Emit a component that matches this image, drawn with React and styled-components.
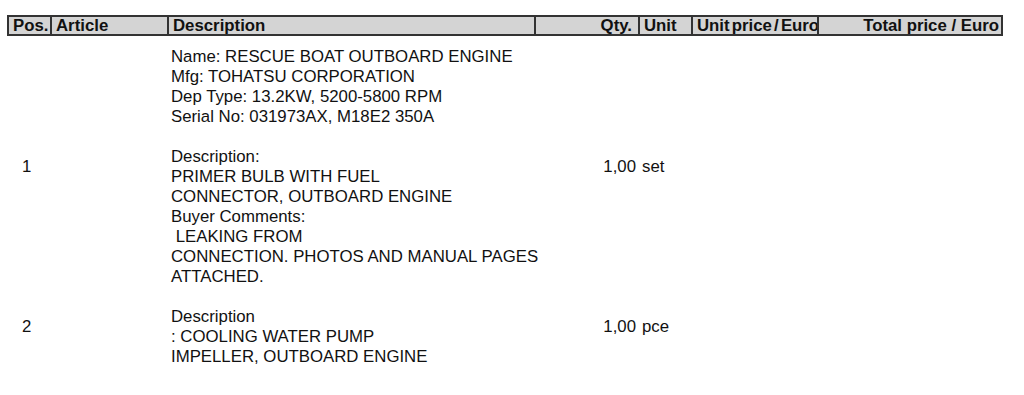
import React from 'react';
import styled, { createGlobalStyle } from 'styled-components';

const GlobalStyle = createGlobalStyle`
  html, body {
    margin: 0;
    padding: 0;
    background: #ffffff;
  }
`;

const COLS = '41px 117px 367px 104px 53px 126px 188px';

const Page = styled.div`
  padding: 15px 0 0 7px;
  width: 996px;
  font-family: "Liberation Sans", Arial, sans-serif;
  color: #111111;
`;

const HeaderRow = styled.div`
  display: grid;
  grid-template-columns: ${COLS};
  height: 21px;
  box-sizing: border-box;
  background: #d4d4d4;
  border: 2px solid #333333;
`;

const HeadCell = styled.div`
  display: flex;
  align-items: center;
  justify-content: ${(p) => (p.right ? 'flex-end' : 'flex-start')};
  padding: ${(p) => (p.right ? '0 6px 0 0' : '0 0 0 4px')};
  border-left: ${(p) => (p.first ? 'none' : '2px solid #333333')};
  font-size: 16.8px;
  font-weight: bold;
  white-space: nowrap;
  overflow: hidden;
  box-sizing: border-box;
  word-spacing: ${(p) => (p.tight ? '-2.5px' : '0')};
`;

const Body = styled.div`
  padding-top: 11px;
`;

const Row = styled.div`
  display: grid;
  grid-template-columns: ${COLS};
  align-items: center;
  font-size: 16.8px;
  line-height: 20px;
`;

const PosCell = styled.div`
  padding-left: 15px;
`;

const DescCell = styled.div`
  grid-column: 3;
  padding-left: 6px;
  white-space: pre;
`;

const QtyCell = styled.div`
  text-align: right;
`;

const UnitCell = styled.div`
  padding-left: 6px;
`;

const rows = [
  {
    pos: '1',
    qty: '1,00',
    unit: 'set',
    lines: [
      'Name: RESCUE BOAT OUTBOARD ENGINE',
      'Mfg: TOHATSU CORPORATION',
      'Dep Type: 13.2KW, 5200-5800 RPM',
      'Serial No: 031973AX, M18E2 350A',
      '',
      'Description:',
      'PRIMER BULB WITH FUEL',
      'CONNECTOR, OUTBOARD ENGINE',
      'Buyer Comments:',
      ' LEAKING FROM',
      'CONNECTION. PHOTOS AND MANUAL PAGES',
      'ATTACHED.',
    ],
  },
  {
    pos: '2',
    qty: '1,00',
    unit: 'pce',
    lines: ['', 'Description', ': COOLING WATER PUMP', 'IMPELLER, OUTBOARD ENGINE'],
  },
];

export default function App() {
  return (
    <Page>
      <GlobalStyle />
      <HeaderRow>
        <HeadCell first>Pos.</HeadCell>
        <HeadCell>Article</HeadCell>
        <HeadCell>Description</HeadCell>
        <HeadCell right>Qty.</HeadCell>
        <HeadCell>Unit</HeadCell>
        <HeadCell tight>Unit price / Euro</HeadCell>
        <HeadCell right>Total price / Euro</HeadCell>
      </HeaderRow>
      <Body>
        {rows.map((row) => (
          <Row key={row.pos}>
            <PosCell>{row.pos}</PosCell>
            <div />
            <DescCell>{row.lines.map((l) => (l === '' ? '\u00a0' : l)).join('\n')}</DescCell>
            <QtyCell>{row.qty}</QtyCell>
            <UnitCell>{row.unit}</UnitCell>
          </Row>
        ))}
      </Body>
    </Page>
  );
}
